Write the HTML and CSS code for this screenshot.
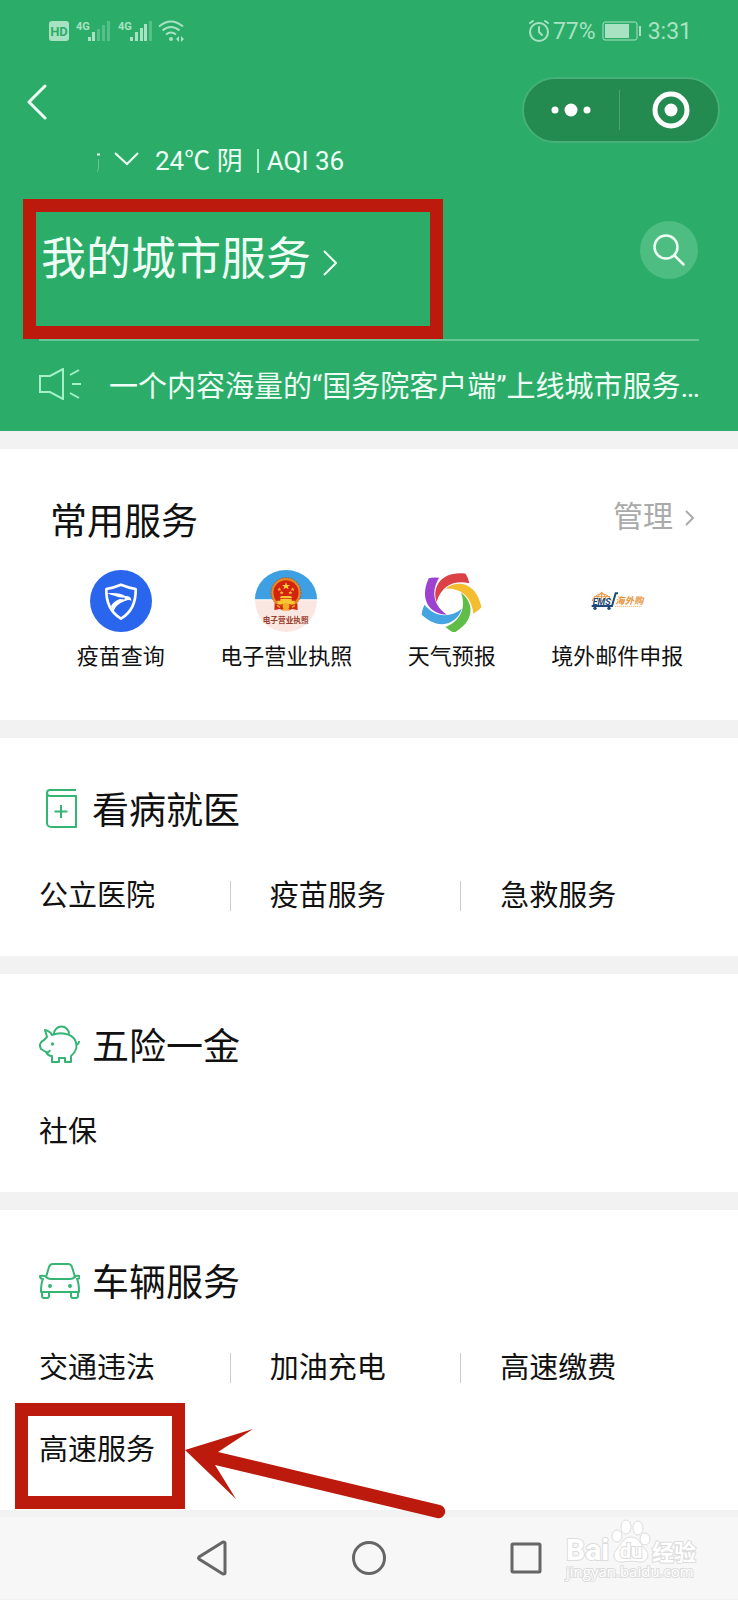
FILE: index.html
```html
<!DOCTYPE html>
<html lang="zh-CN">
<head>
    <meta charset="UTF-8">
    <meta name="viewport" content="width=device-width, initial-scale=1.0">
    <title>我的城市服务</title>
    <link rel="stylesheet" href="styles.css">
</head>
<body>
    <header class="header">
        <div class="status-bar">
            <div class="status-left">
                <svg width="138" height="24" viewBox="0 0 138 24">
                    <rect x="1" y="2" width="20" height="20" rx="3" fill="#a9e2c2"/>
                    <text x="11" y="17" text-anchor="middle" class="hd-text">HD</text>
                    <text x="28" y="11" class="net-text">4G</text>
                    <g fill="#a9e2c2">
                        <rect x="40" y="18" width="3" height="4"/>
                        <rect x="44" y="13" width="3" height="9"/>
                        <g opacity=".35">
                            <rect x="49" y="10" width="3" height="12"/>
                            <rect x="54" y="6" width="3" height="16"/>
                            <rect x="59" y="2" width="3" height="20"/>
                        </g>
                        <rect x="82" y="18" width="3" height="4"/>
                        <rect x="87" y="13" width="3" height="9"/>
                        <rect x="92" y="9" width="3" height="13"/>
                        <rect x="96" y="5" width="3" height="17"/>
                        <rect x="101" y="2" width="3" height="20" opacity=".35"/>
                        <circle cx="123" cy="20" r="2"/>
                        <path d="M131 17v6l-3-3zM133 17v6l3-3z"/>
                    </g>
                    <text x="70" y="11" class="net-text">4G</text>
                    <path d="M111 7.500q12-10 24 0M114.500 11.500q8.500-7 17 0M118 15.500q5-4 10 0" fill="none" stroke="#a9e2c2" stroke-width="2"/>
                </svg>
            </div>
            <div class="status-right">
                <svg width="22" height="24" viewBox="0 0 22 24" fill="none" stroke="#a9e2c2" stroke-width="2" stroke-linecap="round">
                    <circle cx="11" cy="13" r="9"/>
                    <path d="M11 8v5l3 3M2 4l3-2M20 4l-3-2"/>
                </svg>
                <span class="battery-text">77%</span>
                <svg class="battery" width="40" height="20" viewBox="0 0 40 20">
                    <rect x="1" y="1" width="34" height="18" rx="2" fill="none" stroke="#a9e2c2" stroke-width="1"/>
                    <rect x="3" y="3" width="24" height="14" fill="#a9e2c2"/>
                    <rect x="37" y="5" width="2" height="10" fill="#a9e2c2"/>
                </svg>
                <span>3:31</span>
            </div>
        </div>

        <div class="top-row">
            <button class="back" aria-label="返回">
                <svg width="20" height="36" viewBox="0 0 20 36" fill="none" stroke="#effff6" stroke-width="3" stroke-linecap="round" stroke-linejoin="round">
                    <path d="M18 2L2 18l16 16"/>
                </svg>
            </button>
            <div class="capsule">
                <button aria-label="更多">
                    <svg width="40" height="14" viewBox="0 0 40 14" fill="#fff">
                        <circle cx="4" cy="7" r="3.500"/><circle cx="20" cy="7" r="6.500"/><circle cx="36" cy="7" r="3.500"/>
                    </svg>
                </button>
                <button aria-label="关闭">
                    <svg width="38" height="38" viewBox="0 0 38 38">
                        <circle cx="19" cy="19" r="16" fill="none" stroke="#fff" stroke-width="5"/>
                        <circle cx="19" cy="19" r="6.500" fill="#fff"/>
                    </svg>
                </button>
            </div>
        </div>

        <div class="weather">
            <svg width="42" height="24" viewBox="0 0 42 24" fill="none" stroke="#effff6">
                <path d="M0 5.500h3" stroke-width="2"/>
                <path d="M1.500 10v9l-1 4" opacity=".3"/>
                <path d="M18 4l12 11L41 4" stroke-width="2"/>
            </svg>
            <span class="temp">24℃ 阴</span>
            <span class="aqi">AQI 36</span>
        </div>

        <div class="title-row">
            <a href="#" class="title-link">
                <h1>我的城市服务</h1>
                <svg width="14" height="26" viewBox="0 0 14 26" fill="none" stroke="#effff6" stroke-width="2">
                    <path d="M1 1l12 12L1 25"/>
                </svg>
            </a>
            <button class="search" aria-label="搜索">
                <svg width="32" height="32" viewBox="0 0 32 32" fill="none" stroke="#effff6" stroke-width="2.500" stroke-linecap="round">
                    <circle cx="13" cy="13" r="11.500"/>
                    <path d="M21.500 21.500l9 9"/>
                </svg>
            </button>
        </div>

        <a href="#" class="notice">
            <svg width="43" height="32" viewBox="0 0 43 32" fill="none" stroke="#a4f0c8" stroke-width="2">
                <path d="M1 8h10L24 1v30l-13-7H1z"/>
                <path d="M31 7l9-5M33 16h9M31 25l9 5"/>
            </svg>
            <span>一个内容海量的“国务院客户端”上线城市服务…</span>
        </a>
    </header>

    <main>
        <section class="card common">
            <div class="common-head">
                <h2>常用服务</h2>
                <a href="#" class="manage">管理
                    <svg width="10" height="16" viewBox="0 0 10 16" fill="none" stroke="#aaa" stroke-width="2">
                        <path d="M1 1l7 7-7 7"/>
                    </svg>
                </a>
            </div>
            <ul class="apps">
                <li><a href="#">
                    <svg viewBox="0 0 186 186">
                        <circle cx="93" cy="93" r="93" fill="#2a65ee"/>
                        <path d="M49 57q22-4 44-13 22 9 44 13c1 38-10 69-44 89C59 126 48 95 49 57z" fill="none" stroke="#fff" stroke-width="8" stroke-linejoin="round"/>
                        <path d="M52 70c25-3 42 1 54 8 10 0 18 3 18 14-7-4-13-2-21 2-17 7-27 15-32 31l-8-17c7-12 18-18 32-23-14-6-29-8-43-15z" fill="#fff"/>
                        <path d="M60 96c12-11 28-13 44-10" fill="none" stroke="#2a65ee" stroke-width="5"/>
                    </svg>
                    疫苗查询
                </a></li>
                <li><a href="#">
                    <svg viewBox="0 0 186 186">
                        <path d="M0 88a93 88 0 0 1 186 0z" fill="#3e9fe2"/>
                        <path d="M0 91h186a93 95 0 0 1-186 0z" fill="#fbe7e2"/>
                        <circle cx="93" cy="68" r="41" fill="#d3220f" stroke="#e58a20" stroke-width="7"/>
                        <circle cx="93" cy="68" r="45" fill="none" stroke="#b8360e" stroke-width="2" stroke-dasharray="5 4"/>
                        <path d="M93 37l3 8h9l-7 5 3 8-8-5-8 5 3-8-7-5h9z" fill="#ffd23c"/>
                        <path d="M73 52l2 4h4l-3 3 1 4-4-2-4 2 1-4-3-3h4zM113 52l2 4h4l-3 3 1 4-4-2-4 2 1-4-3-3h4zM80 63l2 3h4l-3 3 1 4-4-2-4 2 1-4-3-3h4zM106 63l2 3h4l-3 3 1 4-4-2-4 2 1-4-3-3h4z" fill="#f6b52d"/>
                        <path d="M78 78h30l4 6H74zM76 86h34v6h9v10H67V92h9z" fill="#f8c535"/>
                        <path d="M59 99l16 7h36l16-7 1 21-17-3-7 4H82l-7-4-17 3z" fill="#d02a10"/>
                        <circle cx="93" cy="109" r="10" fill="#f2ac27"/>
                        <path d="M66 106l9 6M120 106l-9 6M82 119h22" stroke="#f2ac27" stroke-width="4"/>
                        <text x="92" y="158" text-anchor="middle" class="license-text">电子营业执照</text>
                    </svg>
                    电子营业执照
                </a></li>
                <li><a href="#">
                    <svg viewBox="0 0 186 186">
                        <defs>
                            <path id="blade" d="M-41 2C-56-42-28-92 46-83Q53-73 57-54C16-64-26-50-41 2z"/>
                        </defs>
                        <g transform="translate(88 94)">
                            <use href="#blade" fill="#dd4148"/>
                            <use href="#blade" fill="#f4bd30" transform="rotate(72)"/>
                            <use href="#blade" fill="#60bd48" transform="rotate(144)"/>
                            <use href="#blade" fill="#45a5e3" transform="rotate(216)"/>
                            <use href="#blade" fill="#9d42d0" transform="rotate(288)"/>
                        </g>
                    </svg>
                    天气预报
                </a></li>
                <li><a href="#">
                    <svg viewBox="0 0 186 186">
                        <g fill="none" stroke="#e79540" stroke-width="3">
                            <path d="M19 93a29 26 0 0 1 57 0M47 67v26M34 92q0-16 13-25 13 9 13 25M23 80h49"/>
                        </g>
                        <path d="M17 108h61l11-38h7" fill="none" stroke="#1d4a78" stroke-width="6"/>
                        <circle cx="27" cy="115" r="5" fill="#1d4a78"/>
                        <circle cx="69" cy="115" r="5" fill="#1d4a78"/>
                        <text x="20" y="105" class="ems-text">EMS</text>
                        <text x="88" y="102" class="shop-text">海外购</text>
                        <path d="M87 109h80" stroke="#efbd83" stroke-width="3" stroke-dasharray="4 2"/>
                    </svg>
                    境外邮件申报
                </a></li>
            </ul>
        </section>

        <section class="card">
            <h2 class="card-title">
                <svg viewBox="0 0 41 41">
                    <path d="M37 2H11a3 3 0 0 0 0 6h26v31H12a4 4 0 0 1-4-4V5"/>
                    <path d="M22 17v13M15.500 23.500h13"/>
                </svg>
                看病就医
            </h2>
            <ul class="links">
                <li><a href="#">公立医院</a></li>
                <li><a href="#">疫苗服务</a></li>
                <li><a href="#">急救服务</a></li>
            </ul>
        </section>

        <section class="card">
            <h2 class="card-title">
                <svg viewBox="0 0 41 41">
                    <path d="M15 10a7.500 7.500 0 0 1 15 0"/>
                    <path d="M13 11c8-3 19-2 23 5 3 6 1 12-4 16v6h-6v-4h-6v4h-7v-6c-3 0-5-2-6-4l-5-3c-2-4-1-7 3-9l3-3-2-7q5 1 7 5z"/>
                    <path d="M37 20c2 1 3-1 3-3M7 28q3 1 4-2"/>
                    <circle cx="13.500" cy="20" r=".7"/>
                </svg>
                五险一金
            </h2>
            <ul class="links">
                <li><a href="#">社保</a></li>
            </ul>
        </section>

        <section class="card">
            <h2 class="card-title">
                <svg viewBox="0 0 41 41">
                    <path d="M7 17l3-10q1-3 4-3h15q3 0 4 3l3 10q-2 2-5 2H12q-3 0-5-2z"/>
                    <path d="M7 17q-1-2-6-1 0 3 3 3c-2 4-2 8-2 13h38c0-5 0-9-2-13 3 0 3-3 3-3q-5-1-6 1"/>
                    <path d="M3 32v4q0 2 2 2h3q2 0 2-2v-4M32 32v4q0 2 2 2h3q2 0 2-2v-4"/>
                    <circle cx="11" cy="26" r="1"/>
                    <circle cx="31" cy="26" r="1"/>
                </svg>
                车辆服务
            </h2>
            <ul class="links">
                <li><a href="#">交通违法</a></li>
                <li><a href="#">加油充电</a></li>
                <li><a href="#">高速缴费</a></li>
                <li class="marked">
                    <a href="#">高速服务</a>
                    <svg class="arrow" width="262" height="92" viewBox="0 0 262 92" fill="#bb1a0c">
                        <path d="M0 21L68 0 33 23l222 53a6.500 6.500 0 0 1-3 13L30 36l21 34z"/>
                    </svg>
                </li>
            </ul>
        </section>
    </main>

    <nav class="sys-nav">
        <button aria-label="返回">
            <svg viewBox="0 0 36 36"><path d="M31 3v30q0 1-2 1L5 19q-1-1 0-2L29 2q2 0 2 1z"/></svg>
        </button>
        <button aria-label="主页">
            <svg viewBox="0 0 36 36"><circle cx="18" cy="18" r="15.500"/></svg>
        </button>
        <button aria-label="最近任务">
            <svg viewBox="0 0 36 36"><rect x="4" y="4" width="28" height="28" rx="1"/></svg>
        </button>
        <svg class="watermark" width="136" height="68" viewBox="0 0 136 68">
            <text x="2" y="43" class="wm-big">Bai</text>
            <g fill="#fff" stroke="#dcdcdc">
                <ellipse cx="53" cy="19" rx="5" ry="6"/>
                <ellipse cx="62" cy="10" rx="5" ry="7"/>
                <ellipse cx="74" cy="11" rx="5" ry="7"/>
                <ellipse cx="81" cy="22" rx="5" ry="6"/>
                <path d="M67 20c8 0 10 8 14 12 6 6 2 14-6 13-6-1-10-1-16 0-9 1-12-7-6-13 4-4 6-12 14-12z"/>
            </g>
            <text x="67" y="41" text-anchor="middle" class="wm-du">du</text>
            <text x="88" y="43" class="wm-cn">经验</text>
            <text x="2" y="60" class="wm-url">jingyan.baidu.com</text>
        </svg>
    </nav>
</body>
</html>
```
FILE: styles.css
```css
*, *::after {
    box-sizing: border-box;
}
body {
    margin: 0;
    background-color: #f2f2f2;
    color: #111;
    font-family: Roboto, "Noto Sans CJK SC", sans-serif;
}
h1, h2, ul {
    margin: 0;
    padding: 0;
    font-weight: normal;
}
ul {
    list-style: none;
}
a {
    color: inherit;
    text-decoration: none;
}
button {
    display: flex;
    align-items: center;
    justify-content: center;
    padding: 0;
    border: none;
    background: none;
    cursor: pointer;
}
svg {
    flex-shrink: 0;
}

/* Cabecera verde */
.header {
    background-color: #2bad69;
    color: #effff6;
}
.status-bar {
    display: flex;
    justify-content: space-between;
    align-items: center;
    height: 62px;
    padding: 0 46px 0 48px;
    color: #a9e2c2;
    font-size: 23px;
}
.status-left, .status-right {
    display: flex;
    align-items: center;
}
.battery-text {
    margin-left: 3px;
}
.battery {
    margin: 0 6px;
}
.hd-text {
    font-size: 13px;
    font-weight: bold;
    fill: #2bad69;
}
.net-text {
    font-size: 11px;
    font-weight: bold;
    fill: #a9e2c2;
}
.top-row {
    display: flex;
    justify-content: space-between;
    align-items: flex-start;
    padding: 15px 18px 0 27px;
}
.back {
    height: 50px;
}
.capsule {
    display: flex;
    align-items: center;
    width: 198px;
    height: 66px;
    border: 2px solid #45b077;
    border-radius: 33px;
    background-color: #238a50;
}
.capsule button {
    flex: 1;
    height: 40px;
}
.capsule button + button {
    padding-left: 4px;
    border-left: 1px solid #4fa073;
}
.weather {
    display: flex;
    align-items: center;
    height: 32px;
    margin: 2px 0 22px;
    padding-left: 97px;
    font-size: 26px;
    line-height: 32px;
}
.temp {
    margin: 0 14px 0 16px;
}
.aqi {
    padding-left: 8px;
    border-left: 2px solid #a4f0c8;
    line-height: 24px;
}
.title-row {
    display: flex;
    justify-content: space-between;
    align-items: flex-start;
    padding: 0 40px 0 23px;
}
.title-link {
    display: flex;
    align-items: flex-start;
    width: 420px;
    height: 140px;
    padding: 16px 5px;
    border: 13px solid #bb1a0c;
}
.title-link h1 {
    font-size: 45px;
    line-height: 64px;
}
.title-link svg {
    margin: 22px 0 0 12px;
}
.search {
    width: 58px;
    height: 58px;
    margin-top: 22px;
    border-radius: 50%;
    background-color: #4dbd81;
}
.notice {
    display: flex;
    align-items: center;
    gap: 27px;
    height: 92px;
    margin: 0 39px;
    padding-bottom: 4px;
    border-top: 2px solid #66c794;
    font-size: 29px;
}
.notice span {
    flex: 1;
    white-space: nowrap;
}

/* Tarjetas */
main {
    display: flex;
    flex-direction: column;
    gap: 18px;
    padding: 18px 0 7px;
}
.card {
    padding: 48px 0 19px;
    background-color: #fff;
}
.card h2 {
    font-size: 37px;
    line-height: 52px;
}
.common {
    padding-bottom: 47px;
}
.common-head {
    display: flex;
    justify-content: space-between;
    padding: 0 43px 0 50px;
}
.manage {
    display: flex;
    align-items: center;
    gap: 12px;
    height: 34px;
    color: #aaa;
    font-size: 30px;
}
.manage svg {
    margin-top: 8px;
}
.apps {
    display: grid;
    grid-template-columns: repeat(4, 1fr);
    margin-top: 21px;
    padding: 0 38px;
}
.apps a {
    display: flex;
    flex-direction: column;
    align-items: center;
    gap: 9px;
    font-size: 22px;
    line-height: 32px;
    white-space: nowrap;
}
.apps svg {
    width: 62px;
    height: 62px;
}
.license-text {
    font-family: "Noto Sans CJK SC", sans-serif;
    font-size: 23px;
    font-weight: bold;
    fill: #97402c;
}
.ems-text {
    font-size: 27px;
    font-weight: bold;
    font-style: italic;
    fill: #1d4a78;
}
.shop-text {
    font-family: "Noto Sans CJK SC", sans-serif;
    font-size: 28px;
    font-weight: bold;
    font-style: italic;
    fill: #e79540;
}
.card-title {
    display: flex;
    align-items: center;
    gap: 12px;
    padding-left: 39px;
}
.card-title svg {
    width: 41px;
    height: 41px;
    margin-bottom: 8px;
    fill: none;
    stroke: #35b574;
    stroke-width: 2;
    stroke-linejoin: round;
}
.links {
    display: grid;
    grid-template-columns: repeat(3, 1fr);
    margin: 17px 46px 0 0;
}
.links li {
    position: relative;
    display: flex;
    align-items: center;
    height: 82px;
}
.links a {
    flex: 1;
    padding-left: 39px;
    font-size: 29px;
    line-height: 30px;
}
.links li:not(:last-child):not(:nth-child(3n)) a {
    border-right: 1px solid #ccc;
}

/* Recuadro y flecha por encima de la lista */
.marked::after {
    content: "";
    position: absolute;
    top: -6px;
    left: 15px;
    width: 170px;
    height: 106px;
    border: 13px solid #bb1a0c;
}
.arrow {
    position: absolute;
    top: 20px;
    left: 185px;
    z-index: 1;
}

/* Barra del sistema */
.sys-nav {
    position: relative;
    display: flex;
    justify-content: center;
    align-items: center;
    gap: 121px;
    height: 82px;
    background-color: #f7f7f7;
}
.sys-nav button svg {
    width: 36px;
    height: 36px;
    fill: none;
    stroke: #666;
    stroke-width: 3;
}
.watermark {
    position: absolute;
    right: 38px;
    top: 0;
}
.watermark text {
    fill: #fff;
    stroke: #dcdcdc;
    stroke-width: 2;
    paint-order: stroke;
}
.wm-big {
    font-size: 30px;
    font-weight: bold;
}
.watermark .wm-du {
    font-size: 20px;
    font-weight: bold;
}
.wm-cn {
    font-family: "Noto Sans CJK SC", sans-serif;
    font-size: 22px;
    font-weight: bold;
}
.wm-url {
    font-family: "Open Sans", sans-serif;
    font-size: 15px;
}
```
